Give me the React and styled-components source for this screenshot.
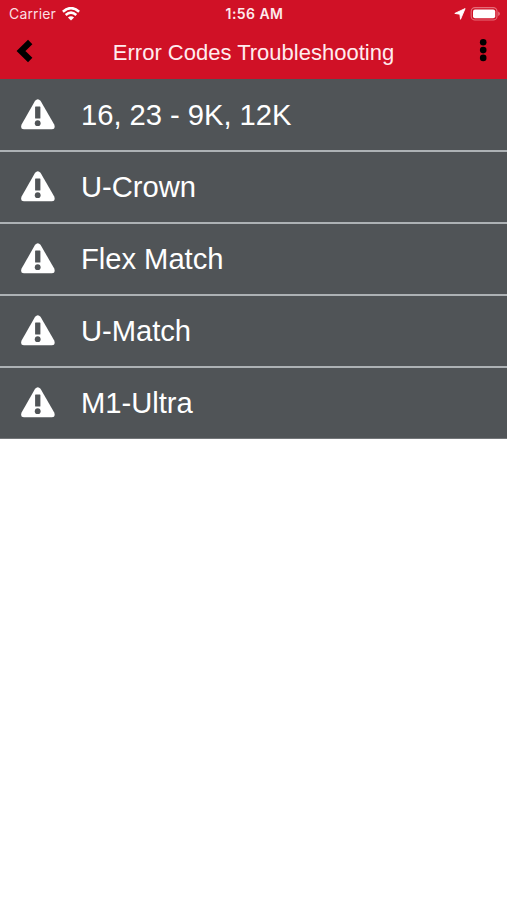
import React from 'react'
import styled, { createGlobalStyle } from 'styled-components';

const GlobalStyle = createGlobalStyle`
  body {
    margin: 0;
    background-color: #fff;
    font-family: "Liberation Sans", Arial, sans-serif;
  }
`;

const errorCodes = [
  '16, 23 - 9K, 12K',
  'U-Crown',
  'Flex Match',
  'U-Match',
  'M1-Ultra',
];

const WarningIcon = () => (
  <svg width="34" height="32" viewBox="0 0 34 32">
    <path
      d="M14.1 1.8Q16.8 -1.3 19.5 1.8L33.2 25.6Q34.8 30.1 31 30.3H2.8Q-1 30.1 0.6 25.6Z"
      fill="#fff"
    />
    <rect x="14.1" y="7.6" width="5.3" height="11.8" rx="0.5" fill="#505457" />
    <circle cx="16.7" cy="24.2" r="2.9" fill="#505457" />
  </svg>
);

const WifiIcon = () => (
  <svg width="18" height="14" viewBox="0 0 18 14" fill="none" stroke="#fff" strokeWidth="2.5">
    <path d="M0.9 4.7Q9 -2.5 17.1 4.7" />
    <path d="M3.7 8Q9 3.2 14.3 8" />
    <path d="M9 13.6L5.9 10.5Q9 7.8 12.1 10.5Z" fill="#fff" stroke="none" />
  </svg>
);

const LocationIcon = () => (
  <svg width="12" height="12" viewBox="0 0 12 12">
    <path d="M0.8 5.4L11.1 0.6L6.5 11.3L5.9 6.2Z" fill="#fff" stroke="#fff" strokeWidth="0.9" strokeLinejoin="round" />
  </svg>
);

const BatteryIcon = () => (
  <svg width="30" height="14" viewBox="0 0 30 14">
    <rect x="1.2" y="0.6" width="25.8" height="12.4" rx="3.8" fill="none" stroke="#e56d79" strokeWidth="1.1" />
    <rect x="3" y="2.4" width="22.2" height="8.8" rx="2" fill="#fff" />
    <path d="M28.1 4.6Q30 5.3 30 6.8Q30 8.3 28.1 9Z" fill="#e56d79" />
  </svg>
);

const App = () => {
  return (
    <Screen>
      <GlobalStyle />
      <Header>
        <StatusBar>
          <Carrier>
            <span>Carrier</span>
            <WifiIcon />
          </Carrier>
          <Clock>1:56 AM</Clock>
          <StatusIcons>
            <LocationIcon />
            <BatteryIcon />
          </StatusIcons>
        </StatusBar>
        <NavBar>
          <NavButton aria-label="Back">
            <svg width="18" height="24" viewBox="0 0 18 24">
              <path d="M14.2 3L5 12L14.2 21" fill="none" stroke="#000" strokeWidth="6.2" />
            </svg>
          </NavButton>
          <Title>Error Codes Troubleshooting</Title>
          <NavButton aria-label="More options">
            <svg width="8" height="24" viewBox="0 0 8 24">
              <circle cx="4.2" cy="3.3" r="3.3" />
              <circle cx="4.2" cy="11.1" r="3.3" />
              <circle cx="4.2" cy="18.9" r="3.3" />
            </svg>
          </NavButton>
        </NavBar>
      </Header>
      <CodeList>
        {errorCodes.map((code) => (
          <CodeRow key={code}>
            <WarningIcon />
            <CodeName>{code}</CodeName>
          </CodeRow>
        ))}
      </CodeList>
    </Screen>
  )
}

const Screen = styled.div`
  min-height: 100vh;
  background-color: #fff;
`;

const Header = styled.header`
  height: 79px;
  background-color: #d01126;
  color: #fff;
`;

const StatusBar = styled.div`
  display: grid;
  grid-template-columns: 1fr auto 1fr;
  align-items: center;
  height: 27px;
  padding: 0 7px 0 9px;
  font-family: Inter, sans-serif;
`;

const Carrier = styled.div`
  display: flex;
  align-items: center;
  gap: 6px;
  color: #fbdfe2;
  font-size: 14px;
  letter-spacing: 0.15px;
`;

const Clock = styled.div`
  font-size: 14px;
  font-weight: 600;
  letter-spacing: 0.45px;
  color: #fdeaec;
`;

const StatusIcons = styled.div`
  display: flex;
  align-items: center;
  justify-content: flex-end;
  gap: 4px;
`;

const NavBar = styled.div`
  display: grid;
  grid-template-columns: 1fr auto 1fr;
  align-items: center;
  height: 48px;
  padding: 0 20px 0 16px;
`;

const NavButton = styled.button`
  display: flex;
  padding: 0;
  border: none;
  background: none;
  cursor: pointer;

  &:last-child {
    justify-self: end;
  }
`;

const Title = styled.h1`
  margin: 3px 0 0 4px;
  font-size: 22px;
  font-weight: normal;
  line-height: 28px;
  color: #ffecee;
`;

const CodeList = styled.ul`
  margin: 0;
  padding: 0;
  list-style: none;
`;

const CodeRow = styled.li`
  display: flex;
  align-items: center;
  box-sizing: border-box;
  height: 72px;
  padding-left: 21px;
  gap: 26px;
  background-color: #505457;
  border-bottom: 2px solid #adb2b5;

  &:first-child {
    height: 73px;
  }

  &:last-child {
    height: 71px;
    border-bottom: 1px solid #737679;
  }
`;

const CodeName = styled.span`
  font-size: 29.2px;
  line-height: 36px;
  letter-spacing: -0.03px;
  color: #fff;
`;

export default App
